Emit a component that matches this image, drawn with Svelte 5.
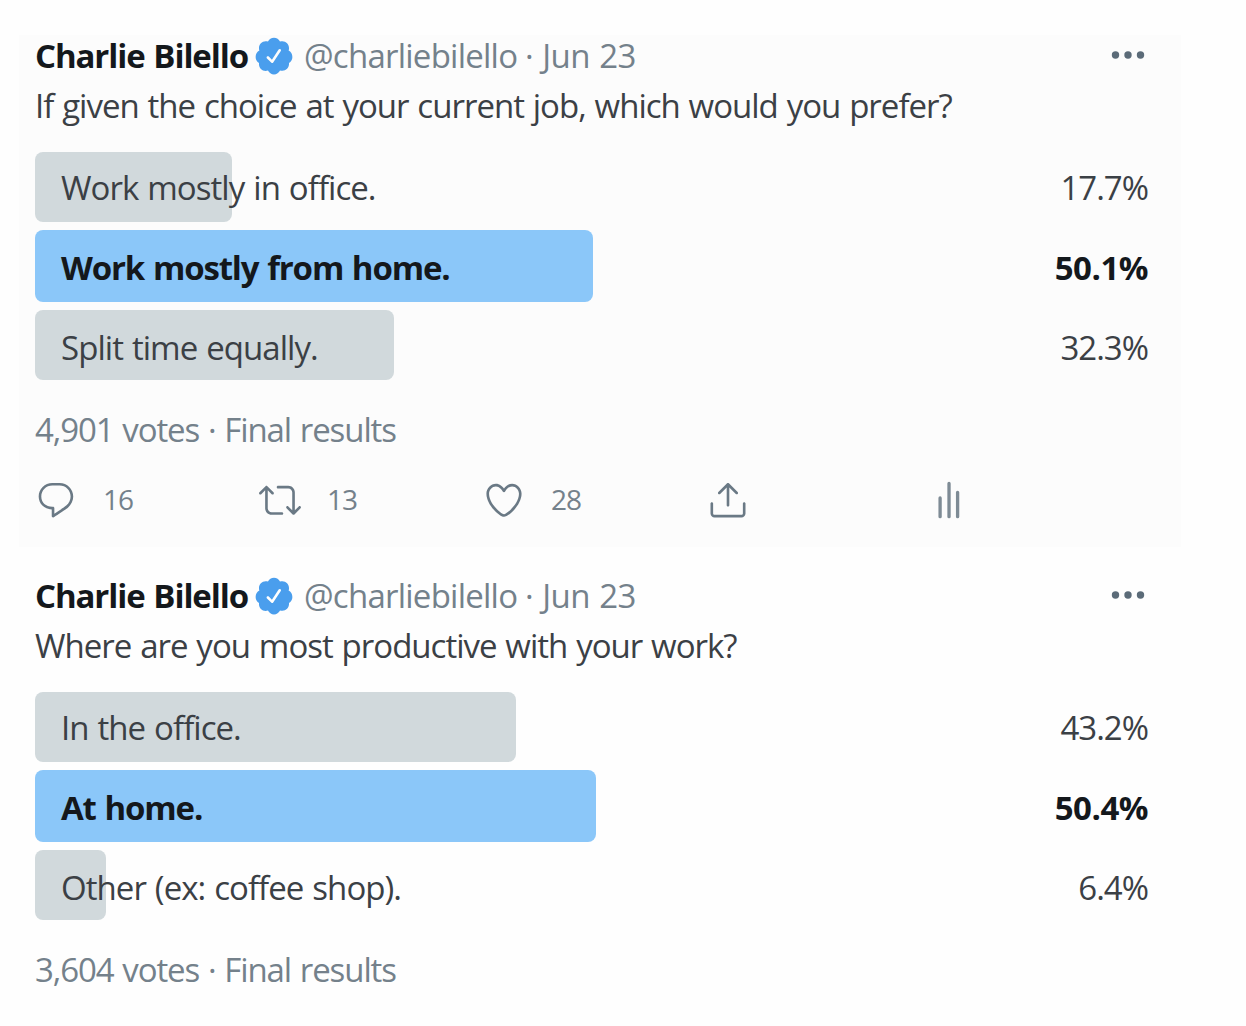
<script lang="ts">
  let tweets = [
    {
      tinted: true,
      question: "If given the choice at your current job, which would you prefer?",
      options: [
        { label: "Work mostly in office.", percent: 17.7 },
        { label: "Work mostly from home.", percent: 50.1, winner: true },
        { label: "Split time equally.", percent: 32.3 }
      ],
      votes: "4,901",
      actions: { replies: 16, retweets: 13, likes: 28 }
    },
    {
      tinted: false,
      question: "Where are you most productive with your work?",
      options: [
        { label: "In the office.", percent: 43.2 },
        { label: "At home.", percent: 50.4, winner: true },
        { label: "Other (ex: coffee shop).", percent: 6.4 }
      ],
      votes: "3,604",
      actions: null
    }
  ];
</script>

<main>
  {#each tweets as tweet}
    <article class="tweet" class:tinted={tweet.tinted}>
      <header>
        <span class="name">Charlie Bilello</span>
        <svg class="badge" viewBox="0 0 24 24"><path d="M22.5 12.5c0-1.58-.875-2.95-2.148-3.6.154-.435.238-.905.238-1.4 0-2.21-1.71-3.998-3.818-3.998-.47 0-.92.084-1.336.25C14.818 2.415 13.51 1.5 12 1.5s-2.816.917-3.437 2.25c-.415-.165-.866-.25-1.336-.25-2.11 0-3.818 1.79-3.818 4 0 .494.083.964.237 1.4-1.272.65-2.147 2.018-2.147 3.6 0 1.495.782 2.798 1.942 3.486-.02.17-.032.34-.032.514 0 2.21 1.708 4 3.818 4 .47 0 .92-.086 1.335-.25.62 1.334 1.926 2.25 3.437 2.25 1.512 0 2.818-.916 3.437-2.25.415.163.865.248 1.336.248 2.11 0 3.818-1.79 3.818-4 0-.174-.012-.344-.033-.513 1.158-.687 1.943-1.99 1.943-3.484zm-6.616-3.334l-4.334 6.5c-.145.217-.382.334-.625.334-.143 0-.288-.04-.416-.126l-.115-.094-2.415-2.415c-.293-.293-.293-.768 0-1.06s.768-.294 1.06 0l1.77 1.767 3.825-5.74c.23-.345.696-.436 1.04-.207.346.23.44.696.21 1.04z"/></svg>
        <span class="handle">@charliebilello</span>
        <span class="date">· Jun 23</span>
        <svg class="more" viewBox="0 0 36 10"><circle cx="5.5" cy="5" r="3.7"/><circle cx="18" cy="5" r="3.7"/><circle cx="30.5" cy="5" r="3.7"/></svg>
      </header>

      <p class="question">{tweet.question}</p>

      <div class="poll">
        {#each tweet.options as option}
          <div class="option" class:winner={option.winner}>
            <div class="bar" style="width: {option.percent}%"></div>
            <span class="label">{option.label}</span>
            <span class="percent">{option.percent}%</span>
          </div>
        {/each}
      </div>

      <p class="meta">{tweet.votes} votes · Final results</p>

      {#if tweet.actions}
        <div class="actions">
          <div class="action">
            <svg viewBox="0 0 24 24"><path d="M14.046 2.242l-4.148-.01h-.002c-4.374 0-7.8 3.427-7.8 7.802 0 4.098 3.186 7.206 7.465 7.37v3.828c0 .108.044.286.12.403.142.225.384.347.632.347.138 0 .277-.038.402-.118.264-.168 6.473-4.14 8.088-5.506 1.902-1.61 3.04-3.97 3.043-6.312v-.017c-.006-4.367-3.43-7.787-7.8-7.788zm3.787 12.972c-1.134.96-4.862 3.405-6.772 4.643V16.67c0-.414-.335-.75-.75-.75h-.396c-3.66 0-6.318-2.476-6.318-5.886 0-3.534 2.768-6.302 6.3-6.302l4.147.01h.002c3.532 0 6.3 2.766 6.302 6.296-.003 1.91-.942 3.844-2.514 5.176z"/></svg>
            <span>{tweet.actions.replies}</span>
          </div>
          <div class="action">
            <svg viewBox="0 0 24 24"><path d="M23.77 15.67c-.292-.293-.767-.293-1.06 0l-2.22 2.22V7.65c0-2.068-1.683-3.75-3.75-3.75h-5.85c-.414 0-.75.336-.75.75s.336.75.75.75h5.85c1.24 0 2.25 1.01 2.25 2.25v10.24l-2.22-2.22c-.293-.293-.768-.293-1.06 0s-.294.768 0 1.06l3.5 3.5c.145.147.337.22.53.22s.383-.072.53-.22l3.5-3.5c.294-.292.294-.767 0-1.06zm-10.66 3.28H7.26c-1.24 0-2.25-1.01-2.25-2.25V6.46l2.22 2.22c.148.147.34.22.532.22s.384-.073.53-.22c.293-.293.293-.768 0-1.06l-3.5-3.5c-.293-.294-.768-.294-1.06 0l-3.5 3.5c-.294.292-.294.767 0 1.06s.767.293 1.06 0l2.22-2.22V16.7c0 2.068 1.683 3.75 3.75 3.75h5.85c.414 0 .75-.336.75-.75s-.337-.75-.75-.75z"/></svg>
            <span>{tweet.actions.retweets}</span>
          </div>
          <div class="action">
            <svg viewBox="0 0 24 24"><path d="M12 21.638h-.014C9.403 21.59 1.95 14.856 1.95 8.478c0-3.064 2.525-5.754 5.403-5.754 2.29 0 3.83 1.58 4.646 2.73.814-1.148 2.354-2.73 4.645-2.73 2.88 0 5.404 2.69 5.404 5.755 0 6.376-7.454 13.11-10.037 13.157H12zM7.354 4.225c-2.08 0-3.903 1.988-3.903 4.255 0 5.74 7.034 11.596 8.55 11.658 1.518-.062 8.55-5.917 8.55-11.658 0-2.267-1.823-4.255-3.903-4.255-2.528 0-3.94 2.936-3.952 2.965-.23.562-1.156.562-1.387 0-.014-.03-1.425-2.965-3.954-2.965z"/></svg>
            <span>{tweet.actions.likes}</span>
          </div>
          <div class="action">
            <svg viewBox="0 0 24 24"><path d="M17.53 7.47l-5-5c-.293-.293-.768-.293-1.06 0l-5 5c-.294.293-.294.768 0 1.06s.767.294 1.06 0l3.72-3.72V15c0 .414.336.75.75.75s.75-.336.75-.75V4.81l3.72 3.72c.146.147.338.22.53.22s.384-.072.53-.22c.293-.293.293-.767 0-1.06z"/><path d="M19.708 21.944H4.292C3.028 21.944 2 20.916 2 19.652V14c0-.414.336-.75.75-.75s.75.336.75.75v5.652c0 .437.355.792.792.792h15.416c.437 0 .792-.355.792-.792V14c0-.414.336-.75.75-.75s.75.336.75.75v5.652c0 1.264-1.028 2.292-2.292 2.292z"/></svg>
          </div>
          <div class="action">
            <svg class="stats" viewBox="0 0 24 24"><path d="M5.2 10.8v10.7M10.3 2.5v19M15.2 7.6v13.9"/></svg>
          </div>
        </div>
      {/if}
    </article>
  {/each}
</main>

<style>
  :global(body) {
    margin: 0;
    background: #fefefe;
  }

  main {
    box-sizing: border-box;
    width: 1246px;
    height: 1026px;
    padding: 35px 65px 0 19px;
    display: flex;
    flex-direction: column;
    gap: 28px;
    overflow: hidden;
    font-family: "Open Sans", "Noto Sans", sans-serif;
    font-size: 33px;
    letter-spacing: -1px;
    word-spacing: 1.3px;
    color: #3b4045;
  }

  .tweet {
    box-sizing: border-box;
    flex: none;
    height: 512px;
    padding: 0 33px 0 16px;
  }

  .tinted {
    background: #fcfcfc;
  }

  header {
    display: flex;
    align-items: center;
    height: 42px;
    white-space: nowrap;
    line-height: 42px;
    color: #74818b;
  }

  .name {
    width: 218px;
    font-weight: 700;
    letter-spacing: -1.1px;
    color: #14181c;
  }

  .badge {
    width: 42px;
    height: 42px;
    fill: #4a9eed;
  }

  .handle {
    width: 221px;
    margin-left: 9px;
    letter-spacing: -0.75px;
  }

  .date {
    letter-spacing: -0.6px;
  }

  .more {
    width: 36px;
    height: 10px;
    margin: 0 2px 2px auto;
    fill: #5b6b78;
  }

  p {
    margin: 0;
    white-space: nowrap;
  }

  .question {
    margin-top: 7px;
    line-height: 44px;
  }

  .poll {
    display: flex;
    flex-direction: column;
    gap: 8px;
    margin-top: 23px;
  }

  .option {
    position: relative;
    display: flex;
    align-items: center;
    justify-content: space-between;
    height: 72px;
    padding-left: 26px;
  }

  .bar {
    position: absolute;
    left: 0;
    top: -1px;
    height: 70px;
    border-radius: 8px;
    background: #d1d9dc;
  }

  .option:first-child .bar {
    top: 1px;
  }

  .label,
  .percent {
    position: relative;
  }

  .label {
    letter-spacing: -0.95px;
  }

  .percent {
    letter-spacing: -1px;
  }

  .winner {
    font-weight: 700;
    color: #14181c;
  }

  .winner .label {
    letter-spacing: -1.15px;
  }

  .winner .bar {
    height: 72px;
    background: #8bc7f9;
  }

  .winner .percent {
    letter-spacing: -0.5px;
  }

  .meta {
    margin-top: 25px;
    line-height: 44px;
    letter-spacing: -1.1px;
    color: #74818b;
  }

  .actions {
    display: flex;
    margin-top: 27px;
  }

  .action {
    display: flex;
    flex: none;
    align-items: center;
    gap: 26px;
    width: 224px;
    height: 42px;
    font-size: 28px;
    color: #74818b;
  }

  .action span {
    padding-bottom: 2px;
  }

  .action svg {
    width: 42px;
    height: 42px;
    fill: #6a7985;
  }

  .action .stats {
    fill: none;
    stroke: #7e8b95;
    stroke-width: 1.9;
    stroke-linecap: round;
  }
</style>
